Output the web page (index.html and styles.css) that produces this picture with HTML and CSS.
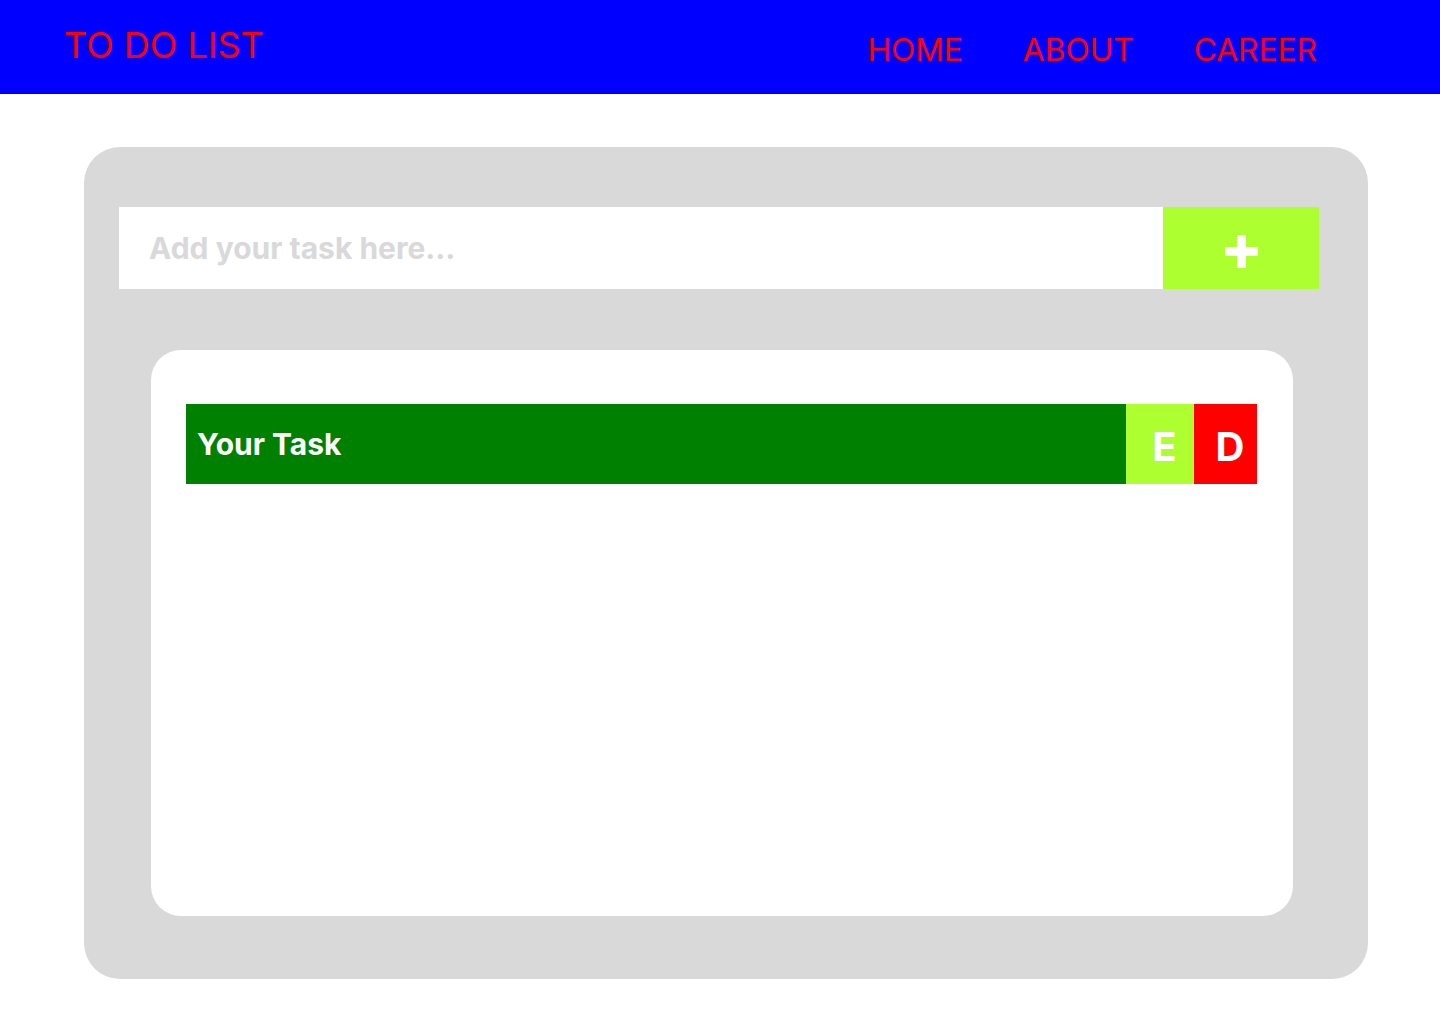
FILE: index.html
```html
<!DOCTYPE html>
<html lang="en">
<head>
<meta charset="utf-8">
<title>To Do List</title>
<link rel="stylesheet" href="styles.css">
</head>
<body>
<header class="topbar">
  <div class="brand">TO DO LIST</div>
  <nav class="nav">
    <a class="nav-link" href="#">HOME</a>
    <a class="nav-link" href="#">ABOUT</a>
    <a class="nav-link" href="#">CAREER</a>
  </nav>
</header>
<main class="card">
  <div class="add-row">
    <input class="task-input" type="text" placeholder="Add your task here...">
    <button class="add-btn" type="button" aria-label="Add">
      <svg width="33" height="33" viewBox="0 0 33 33"><rect x="12" y="0" width="9" height="33" fill="#fff"/><rect x="0" y="12" width="33" height="9" fill="#fff"/></svg>
    </button>
  </div>
  <section class="list">
    <div class="task">
      <span class="task-text">Your Task</span>
      <button class="task-btn edit" type="button">E</button>
      <button class="task-btn del" type="button">D</button>
    </div>
  </section>
</main>
</body>
</html>
```
FILE: styles.css
```css
* { box-sizing: border-box; }
body {
  margin: 0;
  font-family: Inter, "Noto Sans", sans-serif;
  background: #fff;
}
.topbar {
  height: 94px;
  background: #0000ff;
  display: flex;
  align-items: center;
  justify-content: space-between;
  padding: 0 123px 0 64px;
}
.brand {
  color: #ff0000;
  font-size: 36px;
  font-weight: 400;
  margin-top: -4px;
}
.nav {
  display: flex;
  gap: 60px;
  margin-top: 4px;
}
.nav-link {
  color: #ff0000;
  text-decoration: none;
  font-size: 31.7px;
  font-weight: 400;
}
.card {
  margin: 53px 72px 0 84px;
  height: 832px;
  background: #d9d9d9;
  border-radius: 36px;
  padding: 60px 49px 63px 35px;
  display: flex;
  flex-direction: column;
}
.add-row {
  display: flex;
  height: 82px;
}
.task-input {
  flex: 1;
  border: none;
  outline: none;
  background: #fff;
  padding: 0 30px;
  font-family: Inter, sans-serif;
  font-size: 30px;
  font-weight: 700;
  color: #333;
}
.task-input::placeholder {
  color: #d9d9d9;
}
.add-btn {
  width: 156px;
  border: none;
  background: #adff2f;
  display: flex;
  align-items: center;
  justify-content: center;
  padding: 0;
  padding-top: 7px;
}
.list {
  margin: 61px 26px 0 32px;
  flex: 1;
  background: #fff;
  border-radius: 30px;
  padding: 54px 36px 0 35px;
}
.task {
  display: flex;
  height: 80px;
}
.task-text {
  flex: 1;
  background: #008000;
  color: #fff;
  font-size: 30px;
  font-weight: 700;
  display: flex;
  align-items: center;
  padding-left: 11px;
}
.task-btn {
  border: none;
  color: #fff;
  font-family: Inter, sans-serif;
  font-size: 40px;
  font-weight: 700;
  padding: 4px 0 0 9px;
}
.edit { width: 68px; background: #adff2f; }
.del { width: 63px; background: #ff0000; }
```
